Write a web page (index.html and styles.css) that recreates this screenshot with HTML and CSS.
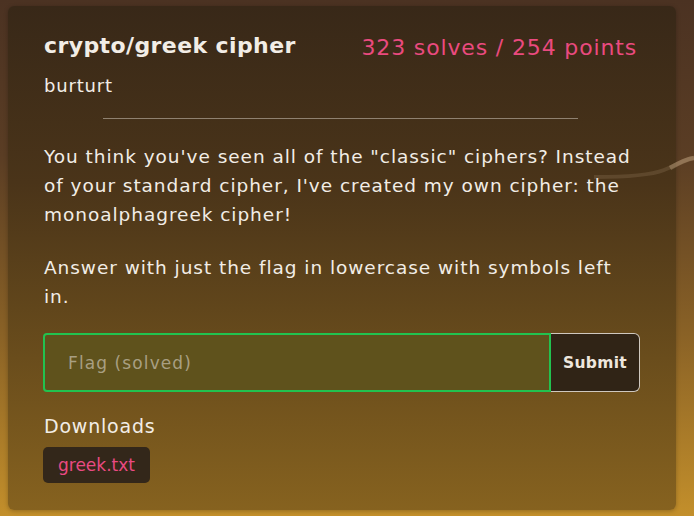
FILE: index.html
```html
<!DOCTYPE html>
<html>
<head>
<meta charset="utf-8">
<link rel="stylesheet" href="styles.css">
</head>
<body>
<div class="card">
  <div class="header">
    <div class="title-block">
      <div class="title">crypto/greek cipher</div>
      <div class="author">burturt</div>
    </div>
    <div class="stats">323 solves / 254 points</div>
  </div>
  <hr class="divider">
  <div class="desc">
    <p>You think you've seen all of the "classic" ciphers? Instead of your standard cipher, I've created my own cipher: the monoalphagreek cipher!</p>
    <p>Answer with just the flag in lowercase with symbols left in.</p>
  </div>
  <form class="flag-form">
    <input class="flag-input" type="text" placeholder="Flag (solved)">
    <button class="submit" type="button">Submit</button>
  </form>
  <div class="downloads">
    <div class="dl-title">Downloads</div>
    <a class="chip">greek.txt</a>
  </div>
</div>
<svg class="wave" viewBox="0 0 100 40" width="100" height="40">
  <path d="M0 27 C 30 27, 55 26, 70 20 S 90 9, 100 8" fill="none" stroke="rgba(230,200,160,0.14)" stroke-width="4"/>
  <path d="M76 18 C 83 14, 92 9, 100 8" fill="none" stroke="rgba(230,200,160,0.3)" stroke-width="4.5"/>
</svg>
</body>
</html>
```
FILE: styles.css
```css
html, body {
  margin: 0;
  padding: 0;
}
body {
  width: 694px;
  height: 516px;
  overflow: hidden;
  position: relative;
  font-family: "DejaVu Sans", "Open Sans", sans-serif;
  background: linear-gradient(to bottom, #4b3222 0%, #5a3d24 30%, #8a6226 65%, #c38f2b 100%);
}
.wave {
  position: absolute;
  right: 0;
  top: 150px;
  pointer-events: none;
}
.card {
  position: relative;
  margin: 6px 18px 0 8px;
  height: 504px;
  box-sizing: border-box;
  border-radius: 6px;
  padding: 24px 39px 0 36px;
  background: linear-gradient(to bottom, #382818 0%, #4a3419 35%, #6a4d1c 70%, #86621f 100%);
  box-shadow: 0 1px 4px rgba(0,0,0,0.25);
  color: #f2ede6;
}
.header {
  display: flex;
  justify-content: space-between;
  align-items: flex-start;
}
.title {
  font-weight: 700;
  font-size: 22px;
  line-height: 32px;
  letter-spacing: 0.4px;
}
.author {
  margin-top: 12px;
  font-size: 18px;
  line-height: 24px;
  letter-spacing: 0.8px;
}
.stats {
  color: #ea4a7f;
  font-size: 22px;
  line-height: 32px;
  margin-top: 2px;
  letter-spacing: 0.85px;
}
.divider {
  width: 80%;
  margin: 20px auto 0;
  border: 0;
  border-top: 1px solid #8f8170;
  height: 0;
}
.desc p {
  margin: 0;
  font-size: 18.5px;
  line-height: 29px;
  letter-spacing: 0.95px;
}
.desc p:first-child {
  margin-top: 23px;
}
.desc p + p {
  margin-top: 24px;
}
.flag-form {
  display: flex;
  margin-top: 22px;
  margin-left: -1px;
  margin-right: -3px;
}
.flag-input {
  flex: 1;
  height: 59px;
  box-sizing: border-box;
  border: 2px solid #22c24f;
  border-radius: 4px 0 0 4px;
  background: #5f521c;
  padding: 0 23px;
  font-family: inherit;
  font-size: 17px;
  letter-spacing: 1.1px;
  color: #f2ede6;
  outline: none;
}
.flag-input::placeholder {
  color: #a89f82;
}
.submit {
  width: 89px;
  height: 59px;
  box-sizing: border-box;
  border: 1.5px solid #cfc8bf;
  border-left: 0;
  border-radius: 0 6px 6px 0;
  background: #302416;
  color: #eee7de;
  font-family: inherit;
  font-weight: 600;
  font-size: 15.5px;
  letter-spacing: 0.3px;
  padding: 0;
}
.downloads {
  margin-top: 20px;
}
.dl-title {
  font-size: 19px;
  line-height: 28px;
  letter-spacing: 0.8px;
}
.chip {
  display: inline-block;
  margin-top: 7px;
  height: 36px;
  line-height: 36px;
  padding: 0 15px;
  border-radius: 5px;
  background: #33271a;
  color: #e94a82;
  font-size: 17px;
  margin-left: -1px;
}
```
